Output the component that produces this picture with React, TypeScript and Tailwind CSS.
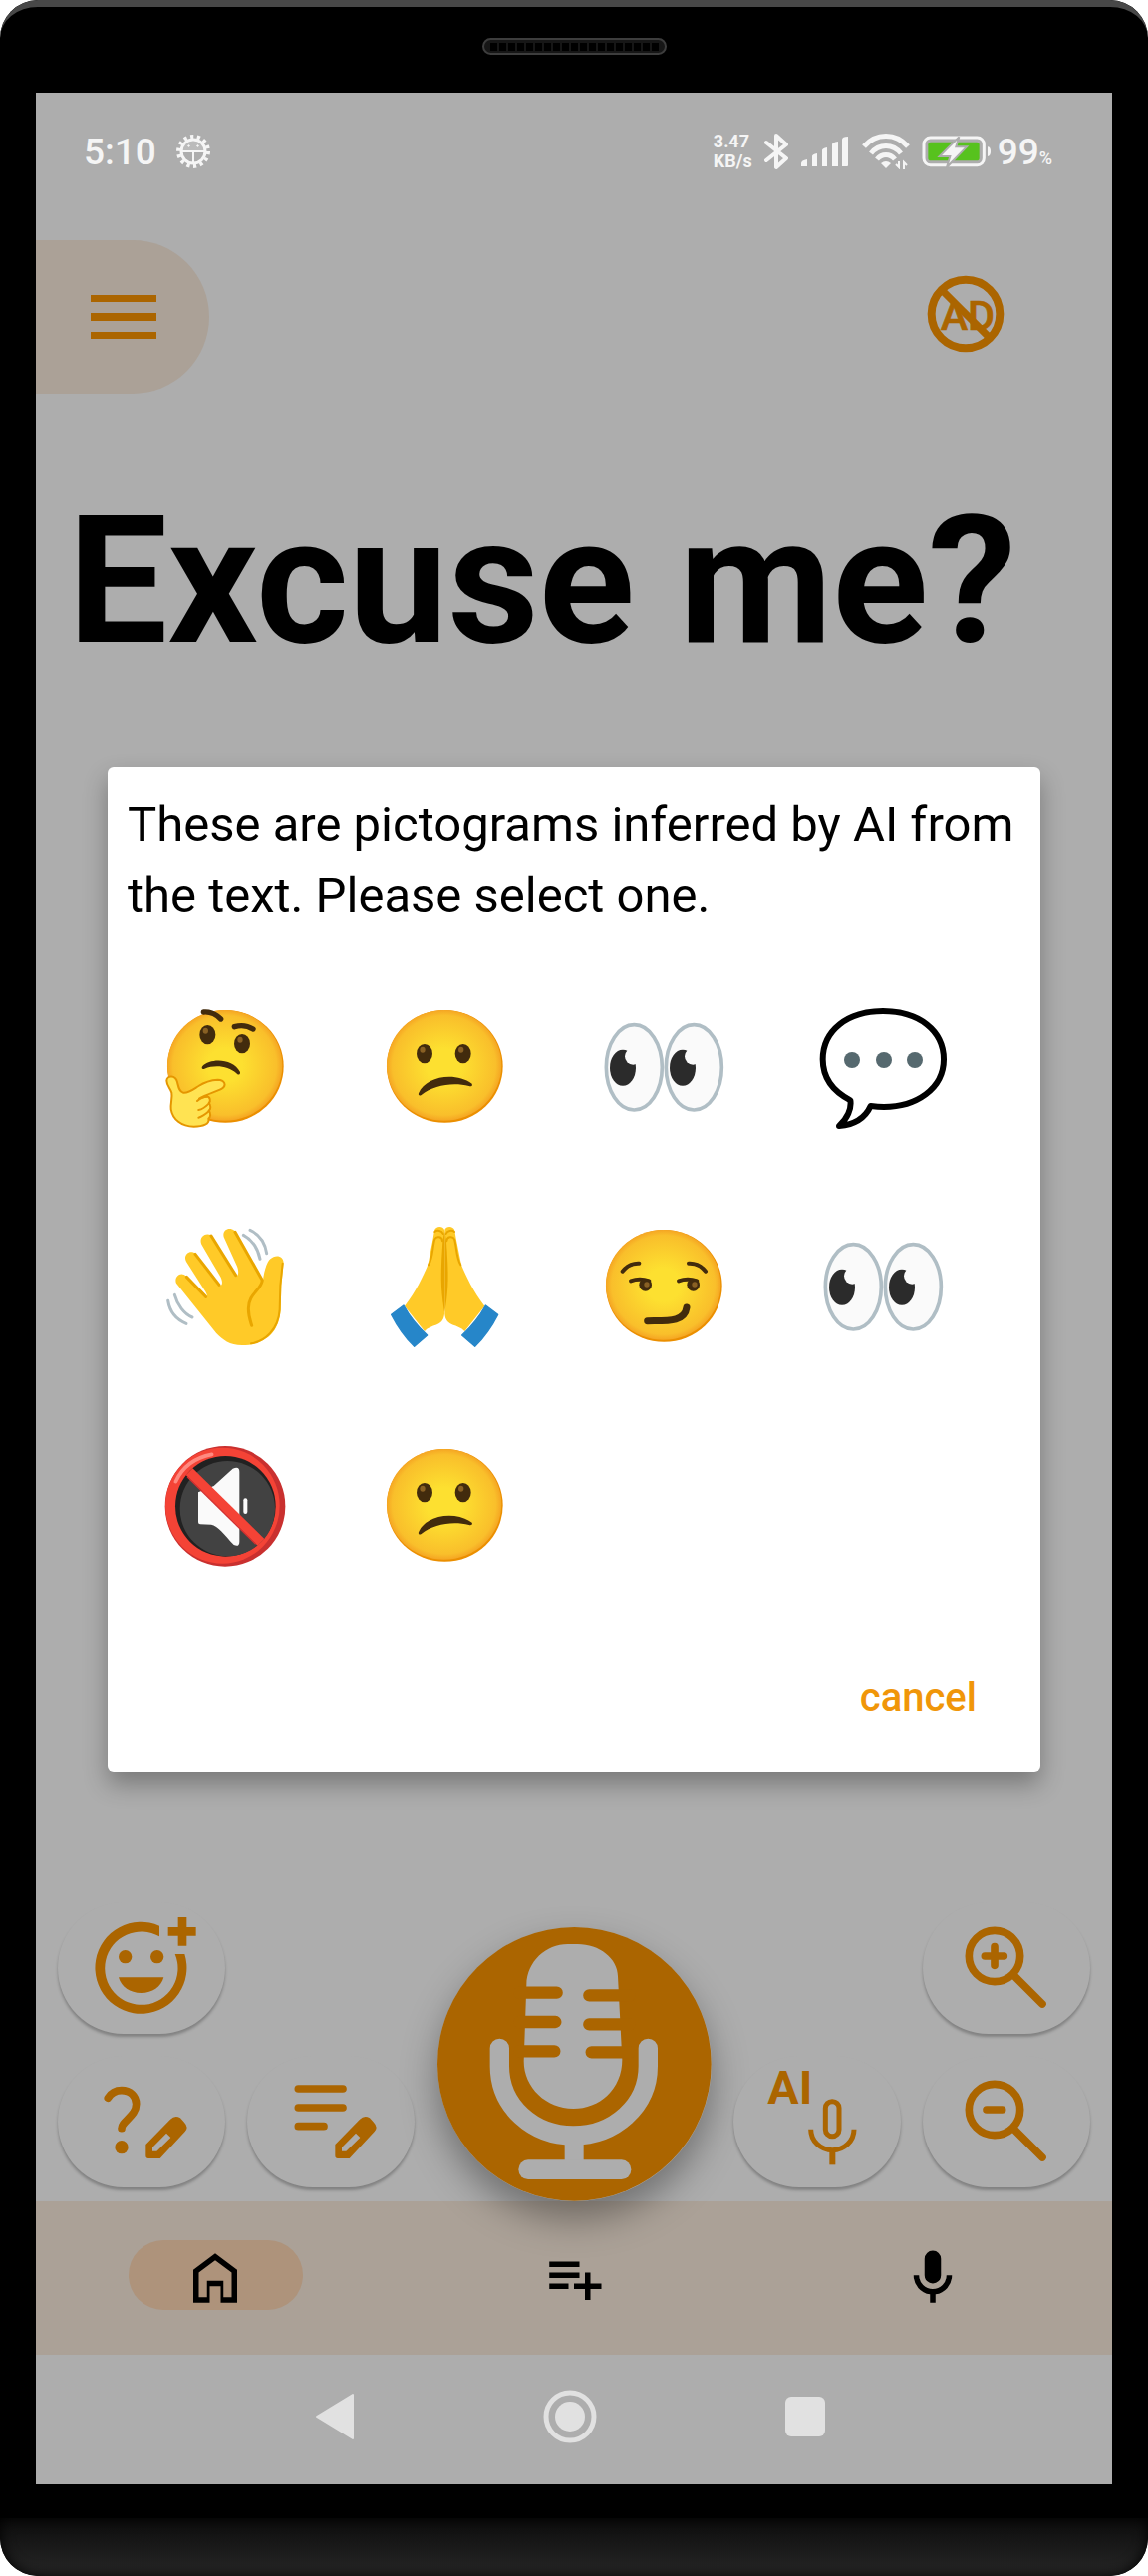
import type { ReactNode } from "react"
import clsx from "clsx"

const Face = ({ children }: { children: ReactNode }) => (
    <>
        <ellipse cx="193" cy="193" rx="175" ry="169" fill="#eb8f00" />
        <ellipse cx="191" cy="190" rx="173" ry="166" fill="url(#face)" />
        {children}
    </>
)

const Pupil = ({ cx, cy }: { cx: number; cy: number }) => (
    <>
        <ellipse cx={cx} cy={cy} rx="24" ry="29" fill="#422b0d" />
        <ellipse cx={cx - 6} cy={cy - 12} rx="8" ry="9" fill="#896024" />
    </>
)

const Thinking = () => (
    <Face>
        <Pupil cx={139} cy={98} />
        <Pupil cx={243} cy={125} />
        <g fill="none" stroke="#422b0d" strokeWidth="16" strokeLinecap="round">
            <path d="M127 30C148 28 166 38 179 51" />
            <path d="M220 74C240 68 260 71 276 81" />
        </g>
        <path
            d="M124 192C145 168 215 166 237 210C238 219 230 220 226 214C200 190 160 188 130 200C122 203 120 197 124 192Z"
            fill="#422b0d"
        />
        <path
            d="M16 236C17 220 42 218 48 240C52 256 54 270 66 272C82 274 96 262 112 252C130 240 150 234 170 233C190 233 198 250 182 260C168 268 132 278 114 290L135 283C148 284 149 298 143 303C150 310 149 322 143 326C150 334 148 346 142 350C146 366 126 374 98 374C60 374 34 352 29 322C27 304 34 288 31 272C28 260 16 250 16 236Z"
            fill="#ffe352"
            stroke="#e59600"
            strokeWidth="6"
            strokeLinejoin="round"
        />
        <path
            d="M108 297C118 288 130 284 138 284M112 324C124 322 134 314 143 305M112 347C124 344 134 336 143 328"
            fill="none"
            stroke="#e59600"
            strokeWidth="6"
            strokeLinecap="round"
        />
    </Face>
)

const Confused = () => (
    <Face>
        <Pupil cx={132} cy={155} />
        <Pupil cx={248} cy={155} />
        <path
            d="M114 274C135 222 225 208 275 245C278 252 272 254 266 252C220 240 160 248 122 279C117 283 112 280 114 274Z"
            fill="#422b0d"
        />
    </Face>
)

const Smirk = () => (
    <Face>
        <g fill="none" stroke="#422b0d" strokeLinecap="round" strokeWidth="12">
            <path d="M68 149C82 132 98 124 118 125" />
            <path d="M267 125C286 124 304 132 318 149" />
            <path d="M93 178C110 172 130 172 148 178" />
            <path d="M237 178C254 172 274 172 292 178" />
            <path d="M143 299C200 298 255 304 261 258" strokeWidth="21" />
        </g>
        <circle cx="137" cy="190" r="19" fill="#422b0d" />
        <circle cx="281" cy="190" r="19" fill="#422b0d" />
        <circle cx="141" cy="189" r="8" fill="#896024" />
        <circle cx="285" cy="189" r="8" fill="#896024" />
    </Face>
)

const Eyes = () => (
    <>
        {[103, 283].map((cx) => (
            <g key={cx}>
                <ellipse cx={cx} cy="196" rx="84" ry="128" fill="#fafafa" stroke="#b0bec5" strokeWidth="11" />
                <ellipse cx={cx - 34} cy="197" rx="39" ry="54" fill="#2b2b2b" />
                <circle cx={cx - 3} cy="163" r="25" fill="#fafafa" />
            </g>
        ))}
    </>
)

const Bubble = () => (
    <>
        <path
            d="M192 27C300 27 375 85 375 172C375 262 290 315 195 315C180 315 170 314 155 312C140 345 110 368 60 372C85 350 98 320 94 295C45 270 11 230 11 172C11 85 85 27 192 27Z"
            fill="#fff"
            stroke="#000"
            strokeWidth="18"
            strokeLinejoin="round"
        />
        {[99, 195, 288].map((cx) => (
            <circle key={cx} cx={cx} cy="174" r="24" fill="#56696f" />
        ))}
    </>
)

const Wave = () => (
    <>
        <path
            d="M45 185C38 170 52 152 68 159C75 162 80 170 84 174L134 228C141 228 138 218 130 206L75 120C64 100 85 82 102 95L174 192C184 194 186 182 178 166L121 68C112 48 130 30 150 40L224 163C232 166 234 150 228 134L188 46C182 24 205 14 220 27L306 178C308 150 318 120 328 112C342 98 368 100 368 125L361 192L359 265C355 335 310 372 243 372C205 372 185 355 165 335Z"
            fill="#ffca28"
        />
        <g fill="none" stroke="#e9a600" strokeWidth="9" strokeLinecap="round" strokeLinejoin="round">
            <path d="M76 166L134 226" />
            <path d="M102 97L174 190" />
            <path d="M150 42L224 161" />
            <path d="M222 31L304 176C300 208 262 215 262 262C262 285 268 300 272 313" />
            <path d="M365 125L358 192L356 265C352 325 312 360 270 367" strokeWidth="6" />
        </g>
        <g fill="none" stroke="#b0bec5" strokeWidth="9" strokeLinecap="round">
            <path d="M247 40C275 55 290 80 297 112" />
            <path d="M267 25C295 38 312 62 317 95" />
            <path d="M40 220C48 250 68 278 93 288" />
            <path d="M20 238C25 270 45 295 75 307" />
        </g>
    </>
)

const PrayHalf = () => (
    <>
        <path
            d="M192 278C188 318 152 306 132 330L72 254C108 208 128 162 142 130L158 50L162 26C166 12 188 12 192 24Z"
            fill="#ffca28"
        />
        <path
            d="M144 130C158 108 156 72 163 52C168 42 186 44 186 58M163 30C170 24 184 26 188 36"
            fill="none"
            stroke="#e9a600"
            strokeWidth="6"
            strokeLinecap="round"
        />
        <path d="M192 26V272C180 200 180 160 187 60Z" fill="#e9a600" />
        <path
            d="M32 280L69 252Q95 300 140 342L101 376Q60 335 32 280Z"
            fill="#2686c9"
            stroke="#2686c9"
            strokeWidth="4"
            strokeLinejoin="round"
        />
    </>
)

const Pray = () => (
    <>
        <PrayHalf />
        <g transform="matrix(-1 0 0 1 385 0)">
            <PrayHalf />
        </g>
    </>
)

const Mute = () => (
    <>
        <circle cx="192" cy="196" r="181" fill="#c9302f" />
        <ellipse cx="184" cy="194" rx="172" ry="174" fill="#f44336" />
        <circle cx="193" cy="196" r="151" fill="#212121" />
        <circle cx="199" cy="203" r="143" fill="#424242" />
        <path
            d="M111 154L158 135L215 83Q235 74 235 92V302Q235 320 218 312C190 282 170 254 150 251L117 250Q111 250 111 244Z"
            fill="#fafafa"
        />
        <rect x="247" y="172" width="12" height="47" rx="6" fill="#fafafa" />
        <path d="M84 92L300 304" stroke="#f44336" strokeWidth="29" />
        <path d="M78 107L284 310" stroke="#d32f2f" strokeWidth="4" />
        <path d="M43 122C62 80 100 50 152 40" fill="none" stroke="#ff8a80" strokeWidth="11" strokeLinecap="round" />
    </>
)

const pictograms = [
    { label: "thinking", Art: Thinking },
    { label: "confused", Art: Confused },
    { label: "eyes", Art: Eyes },
    { label: "speech", Art: Bubble },
    { label: "waving hand", Art: Wave },
    { label: "folded hands", Art: Pray },
    { label: "smirk", Art: Smirk },
    { label: "eyes", Art: Eyes },
    { label: "muted", Art: Mute },
    { label: "confused", Art: Confused },
]

const StatusBar = () => (
    <div className="flex h-[118px] items-center justify-between pr-[60px] pl-12 text-[#f5f5f5]">
        <div className="flex items-center gap-5">
            <span className="text-[37px] leading-none font-medium">5:10</span>
            <svg className="size-[34px]" viewBox="0 0 34 34" fill="none" stroke="currentColor">
                <circle cx="17" cy="17" r="15" strokeWidth="4" strokeDasharray="3.2 3.53" />
                <circle cx="17" cy="17" r="12" strokeWidth="3" />
                <path d="M6 17H28M17 17V29" strokeWidth="2" />
                <path d="M6 17A11 11 0 0 1 28 17Z" fill="currentColor" fillOpacity="0.2" stroke="none" />
                <circle cx="12.5" cy="11.5" r="0.8" fill="currentColor" />
                <circle cx="21.5" cy="11.5" r="0.8" fill="currentColor" />
            </svg>
        </div>
        <div className="flex items-center gap-3">
            <div className="text-[18px] leading-5 font-bold">
                <div>3.47</div>
                <div>KB/s</div>
            </div>
            <svg className="h-10 w-6" viewBox="0 0 24 40" fill="none" stroke="currentColor" strokeWidth="4" strokeLinejoin="round" strokeLinecap="round">
                <path d="M2 11L22 27L12 36V4L22 13L2 29" />
            </svg>
            <svg className="h-8 w-[50px]" viewBox="0 0 50 32" fill="currentColor">
                <path d="M1 31V28Q1 25 7 24V31ZM12 31V21Q12 19 17 18V31ZM22 31V15Q22 13 27 12V31ZM32 31V9Q32 7 38 6V31ZM42 31V4Q42 1 48 1V30Q48 31 47 31Z" />
            </svg>
            <svg className="h-9 w-12" viewBox="0 0 48 36" fill="none" stroke="currentColor" strokeWidth="5">
                <path d="M2 13C14 -1 34 -1 46 13" />
                <path d="M9 20C17 10 31 10 39 20" />
                <path d="M15 26C20 20 28 20 33 26" />
                <path d="M24 35L19 30Q24 26 29 30Z" fill="currentColor" stroke="none" />
                <path d="M37 28V34L34 31M42 36V29L45 32" strokeWidth="2" />
            </svg>
            <div className="flex items-center gap-1.5">
                <svg className="h-[34px] w-[70px]" viewBox="787 69 210 102">
                    <rect x="793" y="78" width="181" height="83" rx="20" fill="none" stroke="currentColor" strokeWidth="9" />
                    <rect x="806" y="92" width="154" height="56" rx="8" fill="#57c21e" />
                    <path d="M985 106Q994 106 994 120T985 135Z" fill="currentColor" />
                    <path d="M899 76L840 135H872L862 168L922 106H890Z" fill="currentColor" stroke="#adadad" strokeWidth="6" />
                </svg>
                <div className="flex items-baseline text-[37px] leading-none font-medium">
                    99<span className="text-[18px] leading-none">%</span>
                </div>
            </div>
        </div>
    </div>
)

const PillButton = ({ label, className, children }: { label: string; className?: string; children: ReactNode }) => (
    <button
        type="button"
        aria-label={label}
        className={clsx(
            "flex h-[132px] w-[168px] items-center justify-center rounded-full shadow-[0_3px_3px_rgba(0,0,0,0.25)]",
            "bg-[#adadad] text-[#ab6500]",
            className
        )}
    >
        {children}
    </button>
)

const Pencil = () => (
    <path
        d="M350 786L424 710Q438 696 454 706L466 719Q480 734 468 747L393 828H358Q350 828 350 820ZM412 752L425 765L383 806H370V795Z"
        fill="currentColor"
        fillRule="evenodd"
    />
)

const Magnifier = ({ sign }: { sign: string }) => (
    <svg className="size-[110px]" viewBox="706 90 330 330" fill="none" stroke="currentColor" strokeWidth="23" strokeLinecap="round">
        <circle cx="835" cy="219" r="77" />
        <path d="M893 277L979 363" />
        <path d={sign} />
    </svg>
)

const Toolbar = () => (
    <div className="flex items-end justify-between px-[22px]">
        <div className="grid grid-cols-2 gap-[22px] pb-3.5">
            <PillButton label="Add pictogram">
                <svg className="size-[110px]" viewBox="172 90 330 330" fill="currentColor">
                    <path d="M391 128A138 138 0 1 0 467 213H438A110 110 0 1 1 391 160Z" />
                    <circle cx="288" cy="221" r="20" />
                    <circle cx="384" cy="221" r="20" />
                    <path d="M268 283H404C396 312 370 330 336 330S276 312 268 283Z" />
                    <path d="M447 102H473V132H501V158H473V188H447V158H417V132H447Z" />
                </svg>
            </PillButton>
            <PillButton label="Edit question" className="col-start-1">
                <svg className="size-[110px]" viewBox="172 552 330 330">
                    <path
                        d="M236 646C245 631 258 623 277 623C303 623 321 640 321 664C321 684 308 697 295 710C284 721 277 728 277 737"
                        fill="none"
                        stroke="currentColor"
                        strokeWidth="23"
                        strokeLinecap="round"
                    />
                    <circle cx="277" cy="794" r="20" fill="currentColor" />
                    <Pencil />
                </svg>
            </PillButton>
            <PillButton label="Edit text">
                <svg className="size-[110px]" viewBox="172 552 330 330">
                    <path d="M239 618H373M239 675H373M239 731H316" stroke="currentColor" strokeWidth="23" strokeLinecap="round" />
                    <Pencil />
                </svg>
            </PillButton>
        </div>

        <button type="button" aria-label="Speak" className="size-[275px] shrink-0 rounded-full shadow-[0_18px_36px_rgba(0,0,0,0.35)]">
            <svg className="size-full" viewBox="88 102 825 825">
                <circle cx="500" cy="514" r="412" fill="#ab6500" />
                <path
                    d="M356 275C357 205 415 153 480 153H510C575 153 631 196 631 250L644 500C644 590 575 648 497 648C415 648 348 585 348 505Z"
                    fill="#adadad"
                />
                <g fill="none" stroke="#ab6500" strokeWidth="37" strokeLinecap="round">
                    <path d="M335 299H447M335 387H443M335 475H440" />
                    <path d="M665 307H545M665 394H545M665 478H552" />
                </g>
                <path
                    d="M275 466V520C275 640 375 729 497 729C620 729 722 640 722 520V466"
                    fill="none"
                    stroke="#adadad"
                    strokeWidth="58"
                    strokeLinecap="round"
                />
                <path d="M471 740H528V810H471Z" fill="#adadad" />
                <rect x="332" y="802" width="339" height="59" rx="29" fill="#adadad" />
            </svg>
        </button>

        <div className="grid grid-cols-2 gap-[22px] pb-3.5">
            <PillButton label="Zoom in" className="col-start-2">
                <Magnifier sign="M806 219H863M835 191V247" />
            </PillButton>
            <PillButton label="AI voice input">
                <svg className="size-[110px] overflow-visible" viewBox="135 552 330 330" fill="none" stroke="currentColor" strokeWidth="15">
                    <text x="151" y="664" fontSize="140" fontWeight="700" fill="currentColor" stroke="none">
                        AI
                    </text>
                    <rect x="325" y="656" width="41" height="105" rx="20" />
                    <path d="M281 740A65 63 0 0 0 411 740" />
                    <path d="M346 803V847" strokeWidth="18" />
                </svg>
            </PillButton>
            <PillButton label="Zoom out">
                <Magnifier sign="M811 219H858" />
            </PillButton>
        </div>
    </div>
)

const tabs = [
    { label: "Home", active: true, path: "M6 19h3v-6h6v6h3v-9l-6-4.5L6 10Zm-2 2V9l8-6 8 6v12h-6v-6h-4v6Z" },
    { label: "Add to list", active: false, path: "M14 10H3v2h11v-2zm0-4H3v2h11V6zm4 8v-4h-2v4h-4v2h4v4h2v-4h4v-2h-4zM3 16h7v-2H3v2z" },
    {
        label: "Voice",
        active: false,
        path: "M12 14q-1.25 0-2.125-.875T9 11V5q0-1.25.875-2.125T12 2q1.25 0 2.125.875T15 5v6q0 1.25-.875 2.125T12 14Zm-1 7v-3.075q-2.6-.35-4.3-2.325Q5 13.625 5 11h2q0 2.075 1.463 3.537Q9.925 16 12 16q2.075 0 3.538-1.463Q17 13.075 17 11h2q0 2.625-1.7 4.6-1.7 1.975-4.3 2.325V21Z",
    },
]

const TabBar = () => (
    <nav className="grid h-[154px] grid-cols-3 items-center justify-items-center bg-[#aba197] pb-1.5">
        {tabs.map((tab) => (
            <button
                key={tab.label}
                type="button"
                aria-label={tab.label}
                className={clsx("flex h-[70px] w-[175px] items-center justify-center rounded-full pt-1.5", tab.active && "bg-[#ae937b]")}
            >
                <svg className="size-[66px] shrink-0" viewBox="0 0 24 24">
                    <path d={tab.path} />
                </svg>
            </button>
        ))}
    </nav>
)

const SystemBar = () => (
    <div className="flex h-[130px] items-center justify-center pr-2 pb-1.5 text-[#e1e1e1]">
        <button type="button" aria-label="Back" className="flex w-[236px] justify-center">
            <svg className="size-14" viewBox="0 0 56 56" fill="currentColor" stroke="currentColor" strokeWidth="2" strokeLinejoin="round">
                <path d="M10 28L46 6V50Z" />
            </svg>
        </button>
        <button type="button" aria-label="Home screen" className="flex w-[236px] justify-center">
            <svg className="size-14" viewBox="0 0 56 56" fill="none" stroke="currentColor">
                <circle cx="28" cy="28" r="24" strokeWidth="5" />
                <circle cx="28" cy="28" r="15" fill="currentColor" stroke="none" />
            </svg>
        </button>
        <button type="button" aria-label="Recent apps" className="flex w-[236px] justify-center">
            <span className="size-10 rounded-md bg-current" />
        </button>
    </div>
)

const PictogramDialog = () => (
    <div className="absolute inset-0 flex items-center px-18 pb-[38px]">
        <div
            role="dialog"
            aria-labelledby="dialog-title"
            className="w-full rounded-md bg-white shadow-[0_12px_24px_rgba(0,0,0,0.3)]"
        >
            <p id="dialog-title" className="px-5 pt-[22px] text-[49px] leading-[71px]">
                These are pictograms inferred by AI from the text. Please select one.
            </p>
            <div className="grid grid-cols-4 pt-[26px] pr-12 pl-2">
                {pictograms.map(({ label, Art }, i) => (
                    <button key={i} type="button" aria-label={label} className="flex h-[220px] items-center justify-center">
                        <svg className="size-32 overflow-visible" viewBox="0 0 384 384">
                            <Art />
                        </svg>
                    </button>
                ))}
            </div>
            <div className="flex justify-end pt-[54px] pr-16 pb-11">
                <button type="button" className="text-[40px] leading-[60px] font-medium text-[#f09609]">
                    cancel
                </button>
            </div>
        </div>
    </div>
)

export default function App() {
    return (
        <div className="flex min-h-screen flex-col overflow-hidden rounded-[38px] bg-black font-[Roboto,sans-serif]">
            <svg className="absolute size-0" aria-hidden="true">
                <defs>
                    <radialGradient id="face">
                        <stop offset="0.3" stopColor="#fde030" />
                        <stop offset="0.9" stopColor="#f9bf2b" />
                        <stop offset="1" stopColor="#f5a623" />
                    </radialGradient>
                </defs>
            </svg>

            {/* Top bezel with earpiece */}
            <div className="flex h-[93px] justify-center rounded-t-[38px] border-t-[7px] border-[#484848] pt-[31px]">
                <div className="flex h-[17px] w-[185px] items-center justify-center rounded-full border-2 border-[#3d3d3d] bg-[#161616]">
                    <svg className="h-2 w-[171px]">
                        <path d="M1 4H171" stroke="#000" strokeWidth="8" strokeDasharray="7 2" />
                    </svg>
                </div>
            </div>

            <main className="relative mx-9 flex flex-1 flex-col bg-[#adadad] text-black">
                <StatusBar />
                <header className="mt-[30px] flex items-center justify-between pr-[107px]">
                    <button
                        type="button"
                        aria-label="Menu"
                        className="flex h-[154px] w-[174px] items-center rounded-r-full bg-[#aba197] pl-[55px] text-[#ab6500]"
                    >
                        <svg className="h-11 w-[66px]" viewBox="0 0 66 44" fill="currentColor">
                            <path d="M0 0H66V7H0ZM0 18H66V26H0ZM0 37H66V44H0Z" />
                        </svg>
                    </button>
                    <button type="button" aria-label="Remove ads" className="mb-1.5 text-[#ab6500]">
                        <svg className="size-20" viewBox="87 75 240 240" fill="none" stroke="currentColor">
                            <text x="131" y="242" fontSize="124" fontWeight="500" fill="currentColor" stroke="currentColor" strokeWidth="2">
                                AD
                            </text>
                            <path d="M138 126L278 266" strokeWidth="22" />
                            <circle cx="207" cy="195" r="103" strokeWidth="24" />
                        </svg>
                    </button>
                </header>
                <h1 className="mt-[83px] px-8 text-[178px] leading-[211px] font-bold">Excuse me?</h1>
                <div className="mt-auto">
                    <Toolbar />
                    <TabBar />
                    <SystemBar />
                </div>
                <PictogramDialog />
            </main>

            {/* Bottom bezel */}
            <div className="mt-[34px] h-[58px] rounded-b-[38px] bg-linear-to-b from-[#0c0c0c] to-[#282828] shadow-[inset_0_0_14px_#000]" />
        </div>
    )
}
